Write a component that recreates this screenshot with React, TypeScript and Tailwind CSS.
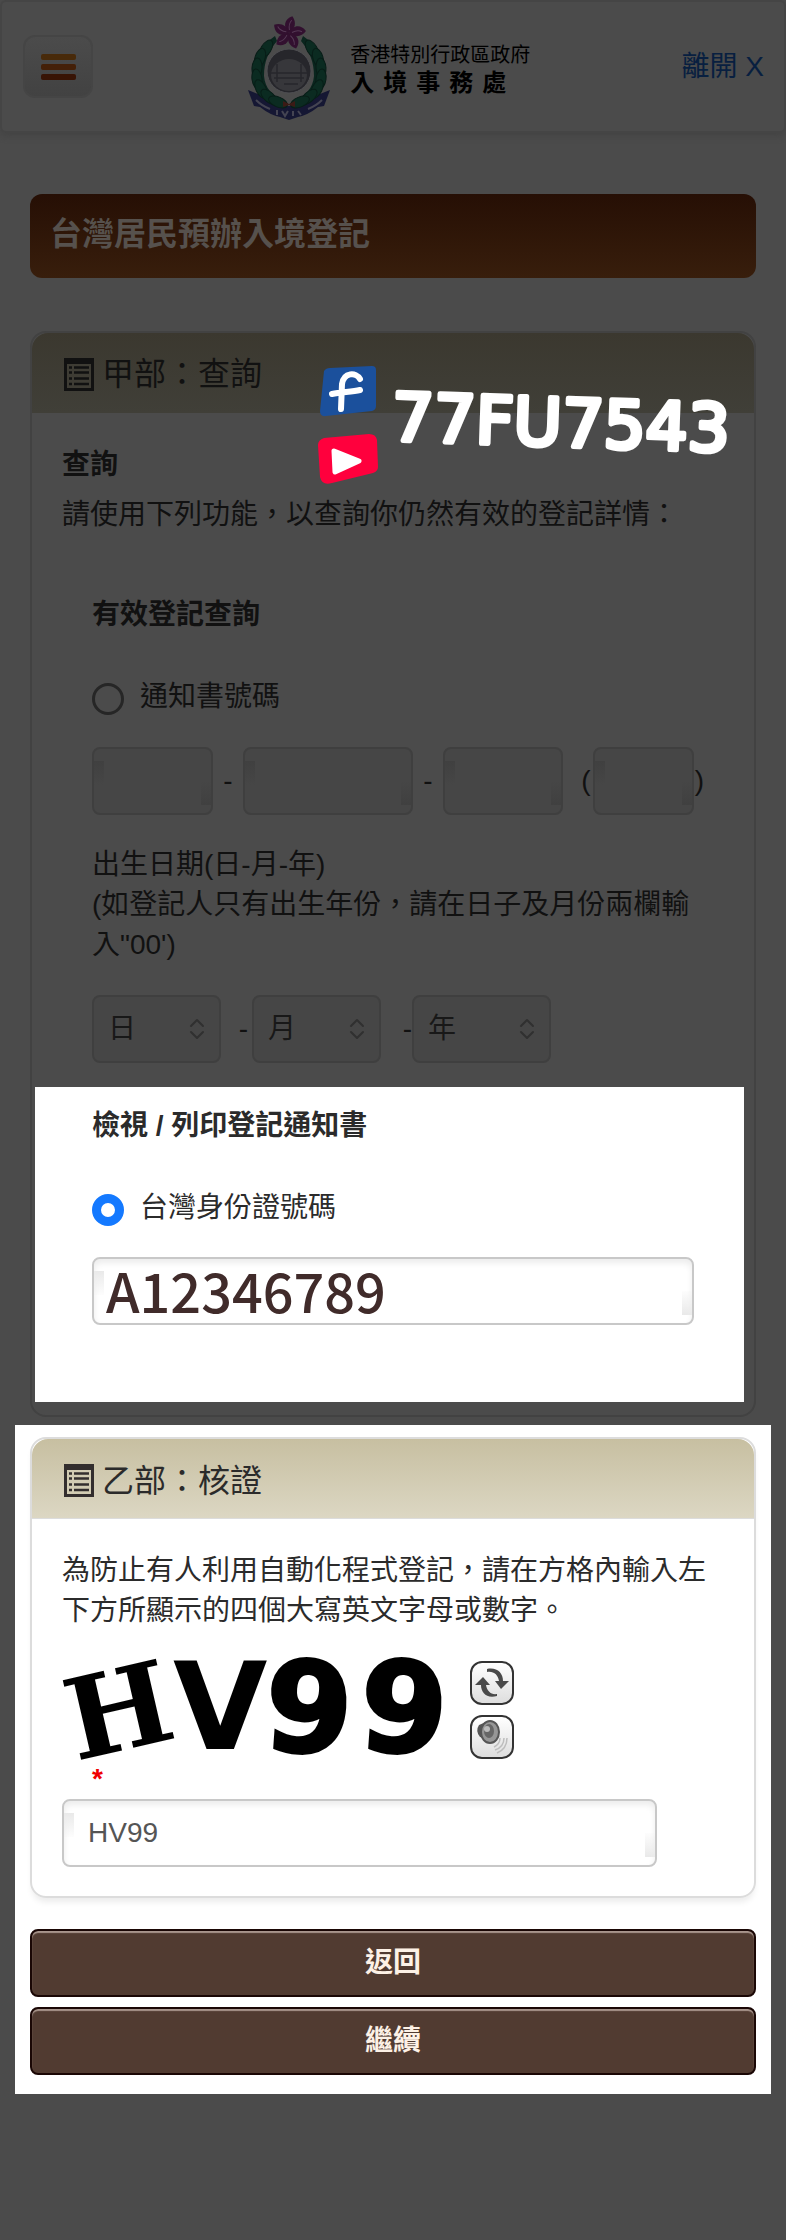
import React from "react";
import { ChevronDown, ChevronUp } from "lucide-react";

const darkField =
  "h-[68px] rounded-lg border-2 border-[#3f3f3f] bg-[#464646] px-3 text-[28px] text-[#181818] bg-[linear-gradient(#404040,#464646),linear-gradient(#464646,#404040)] bg-[length:10px_24px] bg-no-repeat [background-position:left_12px,right_0_bottom_8px]";

const lightField =
  "h-[68px] w-full rounded-lg border-2 border-[#c8c8c8] bg-white shadow-[inset_0_4px_6px_#ececec] bg-[linear-gradient(#e9e9e9,#fdfdfd),linear-gradient(#fdfdfd,#e9e9e9)] bg-[length:10px_24px] bg-no-repeat [background-position:left_12px,right_0_bottom_8px]";

const Emblem: React.FC = () => {
  const leaves = [
    [18, 40, 32],
    [12, 49, 18],
    [9, 59, 4],
    [9, 70, -8],
    [13, 80, -26],
    [21, 88, -48],
    [30, 93, -68],
  ];
  return (
    <svg width="82" height="106" viewBox="0 0 82 106" aria-hidden="true">
      {[0, 72, 144, 216, 288].map((angle) => (
        <g key={angle} transform={`rotate(${angle + 8} 41 19)`}>
          <path d="M41 19C34 14 34 6 42 2C47 7 47 14 41 19Z" fill="#32102f" />
          <path d="M41 16Q39 10 42 6" stroke="#553a55" strokeWidth="1" fill="none" />
        </g>
      ))}
      <path
        d="M0 76L10 80Q24 92 41 92Q58 92 72 80L82 76L76 92L70 93Q60 101 50 103L41 106L32 103Q22 101 12 93L6 92Z"
        fill="#151733"
      />
      {["", "translate(82 0) scale(-1 1)"].map((flip) => (
        <g key={flip} transform={flip}>
          <path
            d="M27 22C12 32 5 46 6 62C7 78 18 90 37 92L38 88C24 82 17 74 16 62C16 48 20 38 29 27Z"
            fill="#0a261e"
          />
          {leaves.map(([x, y, r]) => (
            <ellipse
              key={y}
              cx={x}
              cy={y - 5}
              rx="5"
              ry="10"
              fill="#0b2b21"
              stroke="#081d17"
              strokeWidth="1"
              transform={`rotate(${r} ${x} ${y - 5})`}
            />
          ))}
        </g>
      ))}
      <ellipse cx="41" cy="57" rx="22" ry="22" fill="#26262b" stroke="#4e4e52" />
      <ellipse cx="41" cy="61" rx="18" ry="16" fill="#37373b" />
      <path
        d="M22 59H60M26 64H56M29 50V68M53 50V68M36 70H50"
        stroke="#27272c"
        strokeWidth="1.5"
        fill="none"
      />
      <path d="M35 87L41 90L47 87V93L41 91L35 93Z" fill="#3c1a15" />
      <path
        d="M8 86Q14 92 22 95M60 95Q68 92 74 86M29 96V101M34 97L37 102L40 97M45 97V102M50 97L53 101"
        stroke="#444452"
        strokeWidth="2"
        fill="none"
      />
    </svg>
  );
};

const ListIcon: React.FC<{ back: string; color: string }> = ({ back, color }) => (
  <svg width="30" height="33" viewBox="0 0 30 33" aria-hidden="true">
    <path d="M0 0H30V33H0Z" fill={color} />
    <path d="M3 6H27V30H3Z" fill={back} />
    <path
      d="M5 9.5H8M10 9.5H25M5 14.5H8M10 14.5H25M5 20.5H8M10 20.5H25M5 26H8M10 26H25"
      stroke={color}
      strokeWidth="2.6"
    />
  </svg>
);

const SocialMark: React.FC = () => (
  <svg
    className="absolute top-[31px] left-[284px] overflow-visible"
    width="424"
    height="124"
    viewBox="0 0 424 124"
    role="img"
  >
    <path d="M8 7Q10 4 14 4L56 2Q60 2 60 6V42Q60 46 56 47L10 52Q4 53 4 47Z" fill="#1b509c" />
    <path
      d="M44 15C40 8 28 8 26 20L25 45M16 30C25 28 36 28 44 26"
      stroke="#fff"
      strokeWidth="6"
      strokeLinecap="round"
      fill="none"
    />
    <path d="M2 81Q2 76 8 74L53 70Q60 70 61 76L62 103Q62 107 57 109L16 119Q6 122 4 113Z" fill="#ff003d" />
    <path d="M18 87L43 97L19 108Z" fill="#fff" stroke="#fff" strokeWidth="5" strokeLinejoin="round" />
    <text
      x="75"
      y="76"
      transform="rotate(2 75 76)"
      fill="#fff"
      stroke="#fff"
      strokeWidth="5"
      strokeLinejoin="round"
      className="font-['DejaVu_Sans'] text-[66px]"
    >
      77FU7543
    </text>
  </svg>
);

const Captcha: React.FC = () => (
  <svg
    width="398"
    height="106"
    viewBox="0 0 398 106"
    role="img"
    className="shrink-0 overflow-visible"
  >
    <g fill="#000" className="font-bold">
      <text x="14" y="104" transform="rotate(-13 14 104)" className="font-['DejaVu_Serif'] text-[112px]">
        H
      </text>
      <text x="111" y="92" className="font-['DejaVu_Sans'] text-[122px]">
        V
      </text>
      <g stroke="#000" strokeWidth="3" className="font-['DejaVu_Sans'] text-[126px]">
        <text x="200" y="92" transform="rotate(4 200 92)">
          9
        </text>
        <text x="295" y="92" transform="rotate(4 295 92)">
          9
        </text>
      </g>
    </g>
  </svg>
);

interface IDateSelectProps {
  label: string;
  wide?: boolean;
}

const DateSelect: React.FC<IDateSelectProps> = ({ label, wide }) => (
  <span className={wide ? "relative w-[139px]" : "relative w-[129px]"}>
    <select
      aria-label={label}
      className="h-[68px] w-full appearance-none rounded-lg border-2 border-[#3f3f3f] bg-[#464646] px-[14px] text-[28px] text-[#181818]"
    >
      <option>{label}</option>
    </select>
    <span className="pointer-events-none absolute inset-y-0 right-3 flex flex-col items-center justify-center text-[#303030]">
      <ChevronUp size={24} strokeWidth={2} className="-mb-2" />
      <ChevronDown size={24} strokeWidth={2} className="-mt-1" />
    </span>
  </span>
);

const actions = ["返回", "繼續"];

const App: React.FC = () => {
  return (
    <div className="min-h-screen bg-[#4b4b4b] font-['Liberation_Sans','Noto_Sans_CJK_TC',sans-serif] text-[28px] leading-10 text-[#111]">
      <header className="flex h-[133px] items-center justify-between rounded-md border-2 border-[#454545] pr-5 pl-[21px] shadow-[0_3px_6px_#444]">
        <button
          aria-label="選單"
          className="flex h-[63px] w-[70px] flex-col items-center justify-center gap-1 rounded-xl border-2 border-[#454545] bg-linear-to-b from-[#4b4b4b] to-[#424242]"
        >
          <span className="h-[6px] w-[35px] rounded-xs bg-[#482a0a]" />
          <span className="h-[6px] w-[35px] rounded-xs bg-[#442008]" />
          <span className="h-[6px] w-[35px] rounded-xs bg-[#381405]" />
        </button>
        <div className="flex items-center gap-5 pl-1">
          <Emblem />
          <div className="pt-1 text-black">
            <div className="text-[20px] leading-7">香港特別行政區政府</div>
            <div className="flex gap-[9px] text-[24px] leading-7 font-bold">
              {Array.from("入境事務處").map((char) => (
                <span key={char}>{char}</span>
              ))}
            </div>
          </div>
        </div>
        <a href="#" className="text-[#081f40]">
          離開 X
        </a>
      </header>

      <main className="pt-[61px]">
        <h1 className="mx-[30px] flex h-[84px] items-center rounded-xl bg-linear-to-b from-[#260f05] to-[#381e0c] px-5 pb-1 text-[32px] font-bold text-[#56514d]">
          台灣居民預辦入境登記
        </h1>

        <section className="relative mx-[30px] mt-[53px] rounded-2xl border-2 border-[#424242] pb-[13px]">
          <h2 className="flex h-20 items-center gap-2 rounded-t-2xl bg-linear-to-b from-[#3b382f] to-[#403f38] px-8 pt-0.5 text-[32px]">
            <ListIcon back="#3e3c34" color="#111" />
            甲部：查詢
          </h2>
          <SocialMark />
          <div className="px-[30px] pt-8">
            <h3 className="font-bold">查詢</h3>
            <p className="mt-[10px]">請使用下列功能，以查詢你仍然有效的登記詳情：</p>
            <div className="mt-[60px] px-[30px]">
              <h3 className="font-bold">有效登記查詢</h3>
              <label className="mt-[42px] flex items-center gap-4">
                <input
                  type="radio"
                  name="search"
                  className="mt-1 size-8 appearance-none rounded-full border-[3px] border-[#262626]"
                />
                通知書號碼
              </label>
              <div className="mt-[30px] flex items-center">
                <input aria-label="通知書號碼 1" className={`${darkField} w-[121px]`} />
                <span className="w-[30px] text-center">-</span>
                <input aria-label="通知書號碼 2" className={`${darkField} w-[170px]`} />
                <span className="w-[30px] text-center">-</span>
                <input aria-label="通知書號碼 3" className={`${darkField} w-[120px]`} />
                <span className="ml-auto pr-0.5">(</span>
                <input aria-label="通知書號碼 4" className={`${darkField} w-[101px]`} />
                <span className="-mr-[10px] pl-px">)</span>
              </div>
              <p className="mt-[30px]">
                出生日期(日-月-年)
                <br />
                (如登記人只有出生年份，請在日子及月份兩欄輸入"00')
              </p>
              <div className="mt-[30px] flex items-center">
                <DateSelect label="日" />
                <span className="w-[31px] pr-1 text-right">-</span>
                <DateSelect label="月" />
                <span className="w-[31px] text-right">-</span>
                <DateSelect label="年" wide />
              </div>
            </div>
          </div>

          <div className="mt-6 mr-[10px] ml-[3px] bg-white pt-[19px] pr-[50px] pb-[77px] pl-[57px] text-[#2b2b2b]">
            <h3 className="font-bold">檢視 / 列印登記通知書</h3>
            <label className="mt-[42px] flex items-center gap-4">
              <input
                type="radio"
                name="search"
                defaultChecked
                className="mt-1 size-8 appearance-none rounded-full border-[9px] border-[#1479ff] bg-white"
              />
              台灣身份證號碼
            </label>
            <input
              aria-label="台灣身份證號碼"
              defaultValue="A12346789"
              className={`${lightField} mt-[29px] px-3 pb-1 font-['Noto_Sans_CJK_TC',sans-serif] text-[54px] font-medium text-[#402b2a]`}
            />
          </div>
        </section>

        <div className="mx-[15px] mt-2 bg-white px-[15px] pt-3 pb-[19px] text-[#2b2b2b]">
          <section className="rounded-2xl border-2 border-[#dcdcdc] pb-[29px] shadow-[0_6px_6px_-2px_#ececec]">
            <h2 className="flex h-20 items-center gap-2 rounded-t-2xl border-b border-[#dcdcdc] bg-linear-to-b from-[#c7bfa1] to-[#dcd7c3] px-8 pt-1 text-[32px]">
              <ListIcon back="#d2ccb3" color="#332e2e" />
              乙部：核證
            </h2>
            <div className="px-[30px] pt-8">
              <p>為防止有人利用自動化程式登記，請在方格內輸入左下方所顯示的四個大寫英文字母或數字。</p>
              <div className="mt-[26px] flex items-center gap-[10px]">
                <Captcha />
                <div className="flex flex-col gap-[10px]">
                  <button
                    aria-label="更換圖片"
                    className="flex size-11 items-center justify-center rounded-xl border-2 border-[#333] bg-linear-to-b from-white to-[#dedede]"
                  >
                    <svg width="34" height="30" viewBox="0 0 34 30" fill="#4a4a4a">
                      <path d="M12 1C22-1 28 5 28 13H34L26 21L20 13H24C23 7 19 3 12 4Z" />
                      <path d="M22 28C12 31 6 25 6 17H0L8 9L15 17H11C12 23 16 27 22 26Z" />
                    </svg>
                  </button>
                  <button
                    aria-label="播放語音"
                    className="flex size-11 items-center justify-center rounded-xl border-2 border-[#333] bg-linear-to-b from-white to-[#dedede]"
                  >
                    <svg width="34" height="34" viewBox="0 0 34 34" fill="none">
                      <path d="M4 5L11 2L10 18L5 17Q0 11 4 5Z" fill="#555" />
                      <ellipse cx="15" cy="12" rx="9" ry="11" fill="#969696" stroke="#555" strokeWidth="2" />
                      <ellipse cx="14" cy="11" rx="5" ry="7" fill="#666" />
                      <circle cx="12" cy="9" r="3" fill="#bbb" />
                      <path d="M19 27Q25 24 25 18M20 30Q29 27 29 18M22 33Q32 29 32 18" stroke="#bdbdbd" strokeWidth="1.5" />
                    </svg>
                  </button>
                </div>
              </div>
              <div className="mt-1 pl-[30px] leading-6 font-bold text-[#f00000]">*</div>
              <input
                aria-label="驗證碼"
                defaultValue="HV99"
                className={`${lightField} mt-2 max-w-[595px] px-6 text-[28px] text-[#555]`}
              />
            </div>
          </section>
          <div className="mt-[31px] flex flex-col gap-[10px]">
            {actions.map((action) => (
              <button
                key={action}
                className="h-[68px] rounded-lg border-2 border-[#1a0705] bg-[#513b31] font-bold text-[#fdf1e6] shadow-[inset_0_2px_1px_#a8958c]"
              >
                {action}
              </button>
            ))}
          </div>
        </div>
      </main>
    </div>
  );
};

export default App;
